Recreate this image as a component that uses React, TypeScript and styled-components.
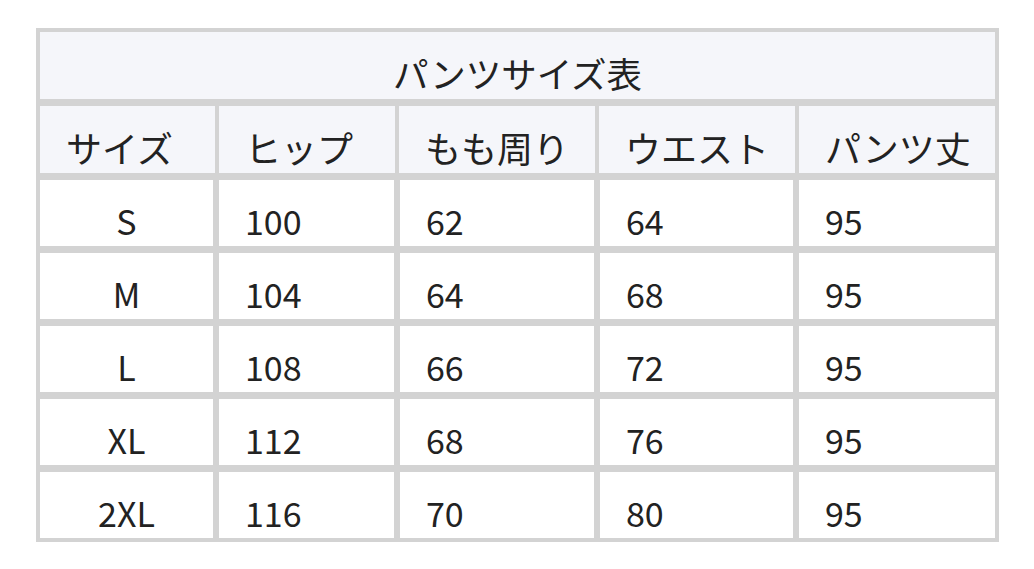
import React from "react";
import styled, { createGlobalStyle } from "styled-components";

const GlobalStyle = createGlobalStyle`
  body {
    margin: 0;
    background: #ffffff;
    font-family: "Noto Sans CJK JP", "Noto Sans", sans-serif;
  }
`;

const Page = styled.div`
  padding: 28px 0 0 36px;
`;

const Table = styled.div`
  width: 963px;
  box-sizing: border-box;
  padding: 4px;
  background: #d3d3d3;
  display: flex;
  flex-direction: column;
  gap: 7px;
  color: #222222;
`;

const Title = styled.div`
  height: 67px;
  box-sizing: border-box;
  padding-top: 23px;
  background: #f5f6fa;
  text-align: center;
  font-size: 35.5px;
  line-height: 1;
`;

const Row = styled.div<{ $header?: boolean }>`
  display: grid;
  grid-template-columns: ${(p) =>
    p.$header ? "175px 176px 196px 196px 196px" : "173px 175px 194px 193px 196px"};
  column-gap: ${(p) => (p.$header ? "4px" : "6px")};
  height: ${(p) => (p.$header ? "67px" : "66px")};
`;

const Cell = styled.div<{ $header?: boolean; $center?: boolean }>`
  box-sizing: border-box;
  background: ${(p) => (p.$header ? "#f5f6fa" : "#ffffff")};
  padding: ${(p) => (p.$header ? "23px" : "24px")} 0 0
    ${(p) => (p.$center ? "0" : "26px")};
  text-align: ${(p) => (p.$center ? "center" : "left")};
  font-size: ${(p) => (p.$header ? "36px" : "34px")};
  line-height: 1;
  white-space: nowrap;
`;

const headers = ["サイズ", "ヒップ", "もも周り", "ウエスト", "パンツ丈"];

const rows = [
  ["S", "100", "62", "64", "95"],
  ["M", "104", "64", "68", "95"],
  ["L", "108", "66", "72", "95"],
  ["XL", "112", "68", "76", "95"],
  ["2XL", "116", "70", "80", "95"],
];

function App() {
  return (
    <Page>
      <GlobalStyle />
      <Table>
        <Title>パンツサイズ表</Title>
        <Row $header>
          {headers.map((h) => (
            <Cell key={h} $header>
              {h}
            </Cell>
          ))}
        </Row>
        {rows.map((r) => (
          <Row key={r[0]}>
            {r.map((v, i) => (
              <Cell key={i} $center={i === 0}>
                {v}
              </Cell>
            ))}
          </Row>
        ))}
      </Table>
    </Page>
  );
}

export default App;
